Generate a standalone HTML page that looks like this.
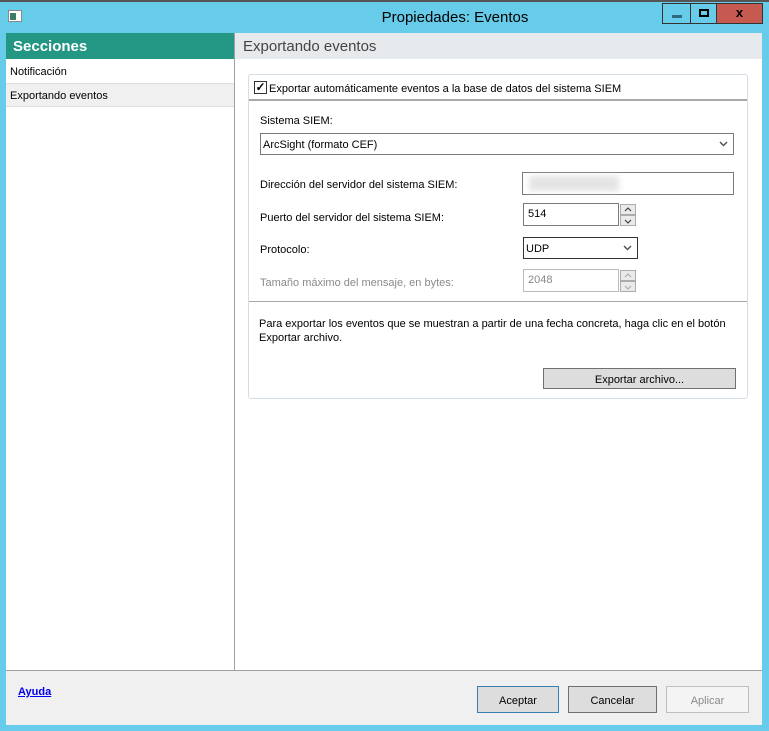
<!DOCTYPE html>
<html><head><meta charset="utf-8"><style>
*{margin:0;padding:0;box-sizing:border-box}
body{width:769px;height:731px;background:#67cbea;font-family:"Liberation Sans",sans-serif;font-size:11px;color:#000;position:relative;overflow:hidden}
.a{position:absolute;white-space:nowrap}
.btn{position:absolute;background:#dddddd;border:1px solid #acacac;text-align:center;font-size:11px}
.inp{position:absolute;background:#fff;border:1px solid #7a7a7a}
.spin{position:absolute;width:16px;border:1px solid #acacac;background:#eaeaea}
.chev{position:absolute;right:5px;top:7px}
</style></head><body>
<div class="a" style="left:0;top:0;width:769px;height:2px;background:#555"></div>
<div class="a" style="left:8px;top:10px;width:14px;height:12px;background:#fff;border:1px solid #888"><div style="position:absolute;left:1px;top:2px;width:6px;height:7px;background:#3a7a6a"></div></div>
<div class="a" style="left:0;width:910px;top:9px;font-size:15px;text-align:center;color:#000">Propiedades: Eventos</div>
<div class="a" style="left:662px;top:3px;width:29px;height:21px;border:1px solid #333;background:#67cbea"><div style="position:absolute;left:9px;top:11px;width:10px;height:3px;background:#2b6a80"></div></div>
<div class="a" style="left:690px;top:3px;width:27px;height:21px;border:1px solid #333;background:#67cbea"><div style="position:absolute;left:8px;top:5px;width:10px;height:8px;border:2px solid #000"></div></div>
<div class="a" style="left:716px;top:3px;width:47px;height:21px;border:1px solid #333;background:#c75a50;text-align:center;font-weight:bold;font-size:13px;line-height:18px">x</div>

<div class="a" style="left:6px;top:33px;width:756px;height:692px;background:#fff"></div>
<div class="a" style="left:6px;top:33px;width:228px;height:26px;background:#239784;color:#fff;font-size:15px;font-weight:bold;padding:5px 0 0 7px">Secciones</div>
<div class="a" style="left:234px;top:33px;width:1px;height:638px;background:#a0a0a0"></div>
<div class="a" style="left:235px;top:33px;width:527px;height:26px;background:#e6eaed;color:#444;font-size:15px;padding:5px 0 0 8px">Exportando eventos</div>
<div class="a" style="left:10px;top:66px">Notificación</div>
<div class="a" style="left:6px;top:83px;width:228px;height:24px;background:#f0f0f0;border-top:1px solid #ddd;border-bottom:1px solid #ddd;padding:6px 0 0 4px">Exportando eventos</div>

<div class="a" style="left:248px;top:74px;width:500px;height:325px;border:1px solid #d5dde5;border-radius:3px"></div>
<div class="a" style="left:249px;top:99px;width:498px;height:2px;background:#a8a8a8"></div>
<div class="a" style="left:254px;top:81px;width:13px;height:13px;border:1px solid #333;background:#fff;font-size:12px;line-height:11px;text-align:center;font-weight:bold">✓</div>
<div class="a" style="left:269px;top:83px">Exportar automáticamente eventos a la base de datos del sistema SIEM</div>
<div class="a" style="left:260px;top:115px">Sistema SIEM:</div>
<div class="inp" style="left:260px;top:133px;width:474px;height:22px;padding:5px 0 0 2px">ArcSight (formato CEF)<svg class="chev" width="9" height="6"><path d="M1 1L4.5 4.5L8 1" stroke="#555" stroke-width="1.5" fill="none"/></svg></div>
<div class="a" style="left:260px;top:179px">Dirección del servidor del sistema SIEM:</div>
<div class="inp" style="left:522px;top:172px;width:212px;height:23px"><div style="position:absolute;left:6px;top:3px;width:90px;height:15px;background:#e4e4e4;filter:blur(3px)"></div></div>
<div class="a" style="left:260px;top:212px">Puerto del servidor del sistema SIEM:</div>
<div class="inp" style="left:523px;top:203px;width:96px;height:23px;padding:4px 0 0 4px">514</div>
<div class="spin" style="left:620px;top:204px;height:11px"><svg style="position:absolute;left:3px;top:2px" width="8" height="5"><path d="M1 4L4 1L7 4" stroke="#333" fill="none"/></svg></div>
<div class="spin" style="left:620px;top:215px;height:11px"><svg style="position:absolute;left:3px;top:3px" width="8" height="5"><path d="M1 1L4 4L7 1" stroke="#333" fill="none"/></svg></div>
<div class="a" style="left:260px;top:244px">Protocolo:</div>
<div class="inp" style="left:523px;top:237px;width:115px;height:22px;padding:5px 0 0 2px;border-color:#333">UDP<svg class="chev" width="9" height="6"><path d="M1 1L4.5 4.5L8 1" stroke="#555" stroke-width="1.5" fill="none"/></svg></div>
<div class="a" style="left:260px;top:277px;color:#8a8a8a">Tamaño máximo del mensaje, en bytes:</div>
<div class="inp" style="left:523px;top:269px;width:96px;height:23px;padding:4px 0 0 4px;border-color:#bbb;color:#888">2048</div>
<div class="spin" style="left:620px;top:270px;height:11px"><svg style="position:absolute;left:3px;top:2px" width="8" height="5"><path d="M1 4L4 1L7 4" stroke="#aaa" fill="none"/></svg></div>
<div class="spin" style="left:620px;top:281px;height:11px"><svg style="position:absolute;left:3px;top:3px" width="8" height="5"><path d="M1 1L4 4L7 1" stroke="#aaa" fill="none"/></svg></div>
<div class="a" style="left:249px;top:301px;width:498px;height:1px;background:#a8a8a8"></div>
<div class="a" style="left:259px;top:317px;line-height:14px">Para exportar los eventos que se muestran a partir de una fecha concreta, haga clic en el botón<br>Exportar archivo.</div>
<div class="btn" style="left:543px;top:368px;width:193px;height:21px;border-color:#707070;padding-top:5px">Exportar archivo...</div>

<div class="a" style="left:6px;top:670px;width:756px;height:1px;background:#a0a0a0"></div>
<div class="a" style="left:6px;top:671px;width:756px;height:54px;background:#f0f0f0"></div>
<div class="a" style="left:18px;top:686px;color:#0000ee;font-weight:bold;text-decoration:underline">Ayuda</div>
<div class="btn" style="left:477px;top:686px;width:82px;height:27px;border-color:#3c7fb1;padding-top:8px">Aceptar</div>
<div class="btn" style="left:568px;top:686px;width:89px;height:27px;border-color:#707070;padding-top:8px">Cancelar</div>
<div class="btn" style="left:666px;top:686px;width:83px;height:27px;background:#f4f4f4;border-color:#bfbfbf;color:#8a8a8a;padding-top:8px">Aplicar</div>
</body></html>
